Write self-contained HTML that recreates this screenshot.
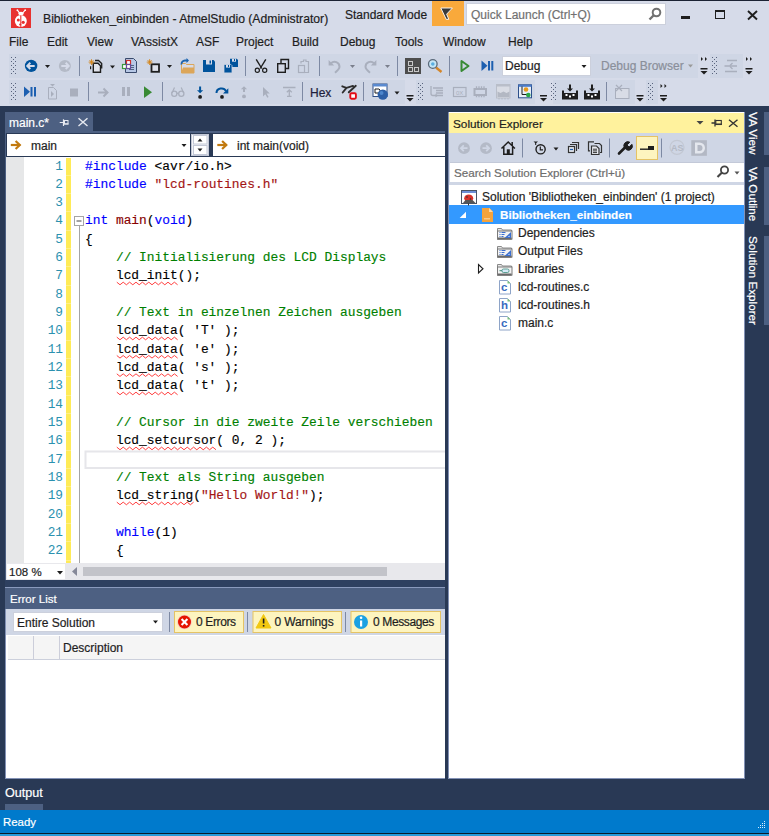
<!DOCTYPE html>
<html><head><meta charset="utf-8">
<style>
*{margin:0;padding:0;box-sizing:border-box}
html,body{width:769px;height:836px;overflow:hidden;background:#293955;font-family:"Liberation Sans",sans-serif;font-size:12px;color:#1e1e1e}
.a{position:absolute}
.t{position:absolute;white-space:pre;line-height:14px;font-size:12px;-webkit-text-stroke:0.2px}
svg{position:absolute;overflow:visible}
.code{position:absolute;left:85px;top:157.5px;font-family:"Liberation Mono",monospace;font-size:12.88px;line-height:18.33px;white-space:pre;color:#000;-webkit-text-stroke:0.15px}
.ln{position:absolute;left:24px;width:39px;top:157.5px;font-family:"Liberation Mono",monospace;font-size:12.8px;line-height:18.33px;white-space:pre;color:#2b91af;text-align:right}
.kw{color:#0000ff}.st{color:#a31515}.cm{color:#008000}.fn{color:#880000}
.sq{}
.grip{position:absolute;width:5px;background-image:radial-gradient(circle,#4d5a75 0.7px,transparent 0.8px);background-size:4px 4px}
.sep{position:absolute;width:1px;background:#8e9bbc}
</style></head><body>
<!-- top border -->
<div class="a" style="left:0;top:0;width:769px;height:1px;background:#1b2233"></div>
<!-- title + menu + toolbar area -->
<div class="a" style="left:0;top:1px;width:769px;height:105px;background:#d6dbe9"></div>

<!-- app icon -->
<div class="a" style="left:11px;top:8px;width:20px;height:20px;background:#e8312f"></div>
<svg style="left:0;top:0" width="40" height="40" viewBox="0 0 40 40">
 <circle cx="20.8" cy="21" r="6" fill="#fff"/>
 <ellipse cx="21" cy="13.6" rx="2.8" ry="1.8" fill="#fff"/>
 <path d="M17.5 10.3L19.5 12.8M25 10.3L22.8 12.8" stroke="#fff" stroke-width="1.1"/>
 <circle cx="17.4" cy="10.2" r="0.9" fill="#fff"/><circle cx="25.2" cy="10.2" r="0.9" fill="#fff"/>
 <path d="M20.8 15.3V27" stroke="#e8312f" stroke-width="1.1"/>
 <circle cx="18.3" cy="20" r="1.5" fill="#e8312f"/><circle cx="23.2" cy="22.3" r="1.6" fill="#e8312f"/><circle cx="20.2" cy="24.5" r="1.1" fill="#e8312f"/>
</svg>
<div class="t" style="left:43px;top:12px;font-size:12.2px">Bibliotheken_einbinden - AtmelStudio (Administrator)</div>
<div class="t" style="left:345px;top:7.5px">Standard Mode</div>
<div class="a" style="left:432px;top:1px;width:32px;height:25px;background:#f9a93b"></div>
<svg style="left:0;top:0" width="769" height="30" viewBox="0 0 769 30"><path d="M440.8 8H452.4L446.6 14.2L448.8 19.3H446.2Z" fill="#3a3a3a" stroke="#fff" stroke-width="0.9" stroke-linejoin="round"/></svg>
<div class="a" style="left:466px;top:3px;width:200px;height:22px;background:#fff;border:1px solid #ccd0dc"></div>
<div class="t" style="left:471px;top:8px;color:#717171">Quick Launch (Ctrl+Q)</div>
<svg style="left:648px;top:7px" width="14" height="14" viewBox="0 0 14 14"><circle cx="8.5" cy="5.5" r="3.8" fill="none" stroke="#717171" stroke-width="2"/><path d="M6 8 L1.5 12.5" stroke="#717171" stroke-width="2.4"/></svg>
<div class="a" style="left:681px;top:16px;width:9px;height:3px;background:#1e1e1e"></div>
<div class="a" style="left:715px;top:10px;width:10px;height:9px;border:1.5px solid #1e1e1e;border-top-width:2.5px"></div>
<svg style="left:747px;top:10px" width="11" height="10" viewBox="0 0 11 10"><path d="M1 1 L10 9.5 M10 1 L1 9.5" stroke="#1e1e1e" stroke-width="1.9"/></svg>

<!-- menu -->
<div class="t" style="left:9px;top:35px">File</div>
<div class="t" style="left:47px;top:35px">Edit</div>
<div class="t" style="left:87px;top:35px">View</div>
<div class="t" style="left:131px;top:35px">VAssistX</div>
<div class="t" style="left:196px;top:35px">ASF</div>
<div class="t" style="left:236px;top:35px">Project</div>
<div class="t" style="left:292px;top:35px">Build</div>
<div class="t" style="left:340px;top:35px">Debug</div>
<div class="t" style="left:395px;top:35px">Tools</div>
<div class="t" style="left:443px;top:35px">Window</div>
<div class="t" style="left:508px;top:35px">Help</div>

<!-- toolbars -->
<div id="tb1" class="a" style="left:9px;top:54px;width:689px;height:24px;background:#cfd6e5"></div>
<div class="a" style="left:710px;top:54px;width:33px;height:24px;background:#cfd6e5"></div>
<div id="tb2" class="a" style="left:9px;top:80px;width:396px;height:24px;background:#cfd6e5"></div>
<div class="a" style="left:416px;top:80px;width:119px;height:24px;background:#cfd6e5"></div>
<div class="a" style="left:553px;top:80px;width:82px;height:24px;background:#cfd6e5"></div>
<div class="a" style="left:646px;top:80px;width:12px;height:24px;background:#cfd6e5"></div>

<!--TB--><svg style="left:0;top:0" width="769" height="110" viewBox="0 0 769 110" shape-rendering="geometricPrecision"><rect x="11" y="57" width="1" height="1" fill="#58637d"/><rect x="15" y="57" width="1" height="1" fill="#58637d"/><rect x="13" y="59" width="1" height="1" fill="#58637d"/><rect x="11" y="61" width="1" height="1" fill="#58637d"/><rect x="15" y="61" width="1" height="1" fill="#58637d"/><rect x="13" y="63" width="1" height="1" fill="#58637d"/><rect x="11" y="65" width="1" height="1" fill="#58637d"/><rect x="15" y="65" width="1" height="1" fill="#58637d"/><rect x="13" y="67" width="1" height="1" fill="#58637d"/><rect x="11" y="69" width="1" height="1" fill="#58637d"/><rect x="15" y="69" width="1" height="1" fill="#58637d"/><rect x="13" y="71" width="1" height="1" fill="#58637d"/><rect x="11" y="73" width="1" height="1" fill="#58637d"/><rect x="15" y="73" width="1" height="1" fill="#58637d"/><circle cx="31.1" cy="65.9" r="6.2" fill="#00539c"/><path d="M27.3 65.9h7.4M30.3 62.8l-3 3.1 3 3.1" stroke="#d6dbe9" stroke-width="2" fill="none"/><path d="M45 65h5l-2.5 3z" fill="#1e1e1e"/><circle cx="64.9" cy="65.9" r="6" fill="#b4bac7"/><path d="M68.7 65.9h-7.4M65.7 62.8l3 3.1-3 3.1" stroke="#d6dbe9" stroke-width="2" fill="none"/><rect x="79" y="56" width="1" height="20" fill="#7d89a3"/><path d="M95 60.5h3.5l3.2 3v5" stroke="#1e1e1e" stroke-width="1.3" fill="none"/><path d="M93.3 63.3h4.7l2.5 2.5v6.5h-7.2z" fill="#e2e4ec" stroke="#1e1e1e" stroke-width="1.4"/><path d="M90.6 66.3v3" stroke="#1e1e1e" stroke-width="1.2"/><path d="M91.5 59.2v5.8M88.6 62.1h5.8M89.5 60.1l4 4M93.5 60.1l-4 4" stroke="#d4861c" stroke-width="0.9"/><circle cx="91.5" cy="62.1" r="1" fill="#d4861c"/><path d="M110 65.5h5l-2.5 3z" fill="#1e1e1e"/><path d="M125.5 58.5h8l3 3v11h-11z" fill="#b7c8e6" stroke="#394a6c"/><path d="M129 65.5h5M129 67.5h5M129 69.5h5" stroke="#394a6c" stroke-width="0.8"/><rect x="126.5" y="60.5" width="4" height="4" fill="#fff" stroke="#d0302a" stroke-width="1.2"/><rect x="122.5" y="64.5" width="4" height="4" fill="#fff" stroke="#3c9a3c" stroke-width="1.2"/><rect x="126.5" y="64.5" width="4" height="4" fill="#fff" stroke="#6a4a9a" stroke-width="1.2"/><rect x="151.5" y="64.3" width="7.5" height="7.5" fill="#dfe2ea" stroke="#1e1e1e" stroke-width="1.8"/><path d="M149.6 59.2v5.8M146.7 62.1h5.8M147.6 60.1l4 4M151.6 60.1l-4 4" stroke="#d4861c" stroke-width="0.9"/><circle cx="149.6" cy="62.1" r="1" fill="#d4861c"/><path d="M167 65h5l-2.5 3z" fill="#1e1e1e"/><path d="M181.5 63.5h4l1 1h7.5v8.5h-12.5z" fill="#d6dbe9" stroke="#dca65a"/><path d="M181 73h13l0-5.5h-11z" fill="#dca65a"/><path d="M181.5 64.5a3.5 3.5 0 0 1 3.5-4h2.5" stroke="#1c64b0" stroke-width="1.8" fill="none"/><path d="M186.5 58l2.5 2.5-2.5 2.5z" fill="#1c64b0"/><path d="M203 60h10.5l1.5 1.5v10.5h-12z" fill="#00539c"/><rect x="206" y="60" width="6" height="4.5" fill="#d6dbe9"/><rect x="209.5" y="60.5" width="1.5" height="3" fill="#00539c"/><path d="M230 58.7h6.8l1.2 1.2v7.1h-8z" fill="#00539c"/><rect x="232" y="58.7" width="4" height="3" fill="#d6dbe9"/><rect x="234" y="59" width="1" height="2" fill="#00539c"/><path d="M224 64.4h6.8l1.2 1.2v7.3h-8z" fill="#00539c" stroke="#cfd6e5" stroke-width="0.8"/><rect x="226" y="64.6" width="4" height="3" fill="#d6dbe9"/><rect x="228" y="65" width="1" height="2" fill="#00539c"/><rect x="245" y="56" width="1" height="20" fill="#7d89a3"/><circle cx="257.3" cy="70.3" r="2.1" fill="none" stroke="#1e1e1e" stroke-width="1.2"/><circle cx="264.7" cy="70.3" r="2.1" fill="none" stroke="#1e1e1e" stroke-width="1.2"/><path d="M256.2 59.3l5.6 9.2M265.8 59.3l-5.6 9.2" stroke="#1e1e1e" stroke-width="1.4"/><path d="M281 63v-3.5h7.5v9h-3" fill="none" stroke="#1e1e1e" stroke-width="1.4"/><rect x="277.7" y="63.7" width="7.6" height="8.6" fill="#d2d7e4" stroke="#1e1e1e" stroke-width="1.4"/><path d="M301 63.5v-2h2.5v-1.5h2.5v1.5h2.5v11h-4" fill="none" stroke="#a9afbd" stroke-width="1.2"/><rect x="298.5" y="65.5" width="6" height="7" fill="none" stroke="#a9afbd" stroke-width="1.2"/><rect x="319" y="56" width="1" height="20" fill="#7d89a3"/><path d="M331 63.2a5 5 0 0 1 8.5 3.5c0 2-1.5 3.5-4.5 6" stroke="#a9afbd" stroke-width="2" fill="none"/><path d="M328.6 60v5.6h5.6z" fill="#a9afbd"/><path d="M350 65h5l-2.5 3z" fill="#7a7f8c"/><path d="M374 63.2a5 5 0 0 0 -8.5 3.5c0 2 1.5 3.5 4.5 6" stroke="#a9afbd" stroke-width="2" fill="none"/><path d="M376.4 60v5.6h-5.6z" fill="#a9afbd"/><path d="M385 65h5l-2.5 3z" fill="#7a7f8c"/><rect x="397" y="56" width="1" height="20" fill="#7d89a3"/><rect x="405" y="58" width="16" height="16" fill="#4d4d4d"/><rect x="408.5" y="61.5" width="4" height="4" fill="none" stroke="#c8c8c8"/><rect x="408.5" y="67.5" width="4" height="4" fill="none" stroke="#c8c8c8"/><rect x="414.5" y="67.5" width="4" height="4" fill="none" stroke="#c8c8c8"/><path d="M436 67.5l5.5 4.5" stroke="#d4862a" stroke-width="2.4"/><circle cx="432.8" cy="64" r="4.3" fill="#c6e6f6" stroke="#5b6a7a" stroke-width="1.3"/><circle cx="432.8" cy="64" r="1.8" fill="#5aaee0"/><rect x="449" y="56" width="1" height="20" fill="#7d89a3"/><path d="M461.5 61v10l7-5z" fill="none" stroke="#388a34" stroke-width="2" stroke-linejoin="round"/><path d="M481.5 60.5v10.5l6-5.25z" fill="#1c5fb0"/><rect x="488" y="61" width="2" height="9.5" fill="#1c5fb0"/><rect x="491.3" y="61" width="2" height="9.5" fill="#1c5fb0"/><path d="M688 64.5h5l-2.5 3z" fill="#9a9a9a"/><rect x="700.5" y="68" width="7" height="1.5" fill="#1e1e1e"/><path d="M700.5 71h7l-3.5 3.5z" fill="#1e1e1e"/><path d="M701.0 57v4l2-2z M705.0 57v4l2-2z" fill="#1e1e1e"/><rect x="712" y="57" width="1" height="1" fill="#58637d"/><rect x="716" y="57" width="1" height="1" fill="#58637d"/><rect x="714" y="59" width="1" height="1" fill="#58637d"/><rect x="712" y="61" width="1" height="1" fill="#58637d"/><rect x="716" y="61" width="1" height="1" fill="#58637d"/><rect x="714" y="63" width="1" height="1" fill="#58637d"/><rect x="712" y="65" width="1" height="1" fill="#58637d"/><rect x="716" y="65" width="1" height="1" fill="#58637d"/><rect x="714" y="67" width="1" height="1" fill="#58637d"/><rect x="712" y="69" width="1" height="1" fill="#58637d"/><rect x="716" y="69" width="1" height="1" fill="#58637d"/><rect x="714" y="71" width="1" height="1" fill="#58637d"/><rect x="712" y="73" width="1" height="1" fill="#58637d"/><rect x="716" y="73" width="1" height="1" fill="#58637d"/><path d="M727 60.5h10M730 66h7M725 71.5h12M724.5 66h5" stroke="#a9afbd" stroke-width="1.3"/><path d="M729.5 66l3-3M729.5 66l3 3" stroke="#a9afbd" stroke-width="1.3" fill="none"/><rect x="745.5" y="68" width="7" height="1.5" fill="#1e1e1e"/><path d="M745.5 71h7l-3.5 3.5z" fill="#1e1e1e"/><path d="M746.0 57v4l2-2z M750.0 57v4l2-2z" fill="#1e1e1e"/><rect x="11" y="83" width="1" height="1" fill="#58637d"/><rect x="15" y="83" width="1" height="1" fill="#58637d"/><rect x="13" y="85" width="1" height="1" fill="#58637d"/><rect x="11" y="87" width="1" height="1" fill="#58637d"/><rect x="15" y="87" width="1" height="1" fill="#58637d"/><rect x="13" y="89" width="1" height="1" fill="#58637d"/><rect x="11" y="91" width="1" height="1" fill="#58637d"/><rect x="15" y="91" width="1" height="1" fill="#58637d"/><rect x="13" y="93" width="1" height="1" fill="#58637d"/><rect x="11" y="95" width="1" height="1" fill="#58637d"/><rect x="15" y="95" width="1" height="1" fill="#58637d"/><rect x="13" y="97" width="1" height="1" fill="#58637d"/><rect x="11" y="99" width="1" height="1" fill="#58637d"/><rect x="15" y="99" width="1" height="1" fill="#58637d"/><path d="M24 86.5v10.5l6-5.25z" fill="#1c5fb0"/><rect x="30.5" y="87" width="2" height="9.5" fill="#1c5fb0"/><rect x="34" y="87" width="2" height="9.5" fill="#1c5fb0"/><path d="M48.5 87.5h5l3 3v8.5h-8z" fill="none" stroke="#a9afbd"/><path d="M51 91v6l3-3z" fill="#a9afbd"/><path d="M50 84h5l-2.5 2.5z" fill="#a9afbd"/><rect x="70" y="88.5" width="8" height="8" fill="#a9afbd"/><rect x="88" y="82" width="1" height="19" fill="#7d89a3"/><path d="M98 92.5h9M103.5 88.5l4 4-4 4" stroke="#a9afbd" stroke-width="2" fill="none"/><rect x="122" y="87" width="3" height="9" fill="#a9afbd"/><rect x="127" y="87" width="3" height="9" fill="#a9afbd"/><path d="M144 86.3v11.7l8-5.85z" fill="#388a34"/><rect x="162" y="82" width="1" height="19" fill="#7d89a3"/><circle cx="174.3" cy="93.8" r="2.6" fill="none" stroke="#a9afbd" stroke-width="1.3"/><circle cx="181.3" cy="93.8" r="2.6" fill="none" stroke="#a9afbd" stroke-width="1.3"/><path d="M176.8 93.3h2M172 93l2.5-5.5M183.7 93l-2.5-5.5" stroke="#a9afbd" stroke-width="1.2" fill="none"/><path d="M200.1 86.5v5" stroke="#00539c" stroke-width="2"/><path d="M197 90.3h6.2l-3.1 3z" fill="#00539c"/><circle cx="200.1" cy="96.9" r="1.9" fill="#1e1e1e"/><path d="M216.5 93a5 4.5 0 0 1 9.5-2" stroke="#00539c" stroke-width="2" fill="none"/><path d="M228.3 88.2v5.3h-5.3z" fill="#00539c"/><circle cx="222" cy="96.9" r="1.9" fill="#1e1e1e"/><path d="M244 92v-5" stroke="#a9afbd" stroke-width="2"/><path d="M240.9 89.2h6.2l-3.1-3z" fill="#a9afbd"/><circle cx="244" cy="96.4" r="1.9" fill="#a9afbd"/><path d="M263 87v9.5l2.3-2.3 2 3.5 1.3-.8-2-3.4h3.2z" fill="#a9afbd"/><path d="M283 87.5h12.5M289.3 90v6M286.8 92.3l2.5-2.5 2.5 2.5M287 96.3h4.6" stroke="#a9afbd" stroke-width="1.3" fill="none"/><rect x="302" y="82" width="1" height="19" fill="#7d89a3"/><path d="M342.3 86.3l4.2 1.6-3.8 4.6M346.5 87.9l6.5-2M355.8 85.8l-7 6.5" stroke="#2e2e2e" stroke-width="1.9" fill="none" stroke-linecap="round"/><rect x="350.3" y="93.2" width="5.6" height="5.6" rx="1.2" fill="#fff" stroke="#e30c16" stroke-width="1.9"/><rect x="363" y="82" width="1" height="19" fill="#7d89a3"/><rect x="373" y="84" width="14" height="12.5" fill="#fff" stroke="#2e4e86"/><rect x="373" y="84" width="14" height="2.5" fill="#5a8ad0"/><path d="M375 89h4l1 1v3h-5z" fill="none" stroke="#1e1e1e"/><circle cx="382.8" cy="94.6" r="5.2" fill="#2d5fa6"/><circle cx="381.5" cy="93" r="2" fill="#4d86cc"/><path d="M394.5 91.5h5l-2.5 3z" fill="#1e1e1e"/><rect x="406.5" y="95" width="7" height="1.5" fill="#1e1e1e"/><path d="M406.5 98h7l-3.5 3.5z" fill="#1e1e1e"/><rect x="418" y="83" width="1" height="1" fill="#58637d"/><rect x="422" y="83" width="1" height="1" fill="#58637d"/><rect x="420" y="85" width="1" height="1" fill="#58637d"/><rect x="418" y="87" width="1" height="1" fill="#58637d"/><rect x="422" y="87" width="1" height="1" fill="#58637d"/><rect x="420" y="89" width="1" height="1" fill="#58637d"/><rect x="418" y="91" width="1" height="1" fill="#58637d"/><rect x="422" y="91" width="1" height="1" fill="#58637d"/><rect x="420" y="93" width="1" height="1" fill="#58637d"/><rect x="418" y="95" width="1" height="1" fill="#58637d"/><rect x="422" y="95" width="1" height="1" fill="#58637d"/><rect x="420" y="97" width="1" height="1" fill="#58637d"/><rect x="418" y="99" width="1" height="1" fill="#58637d"/><rect x="422" y="99" width="1" height="1" fill="#58637d"/><path d="M433 88h10M436 90.5h7M436 93h7M436 95.5h7M431 86v7.5a2 2 0 0 0 2 2h3" stroke="#a9afbd" stroke-width="1.3" fill="none"/><path d="M435.5 93.5l2.5 2-2.5 2z" fill="#a9afbd"/><rect x="453.5" y="87.5" width="12.5" height="9" fill="none" stroke="#a9afbd" stroke-width="1.2"/><text x="456" y="94.5" font-size="6" fill="#a9afbd" font-family="Liberation Sans">0X</text><rect x="474.5" y="89" width="11.5" height="6" fill="none" stroke="#a9afbd" stroke-width="2"/><path d="M476.5 86.3v2M479 86.3v2M481.5 86.3v2M484 86.3v2M476.5 95.2v2M479 95.2v2M481.5 95.2v2M484 95.2v2" stroke="#a9afbd" stroke-width="1.3"/><rect x="496.5" y="84.5" width="13.5" height="13.5" fill="#d9dce4" stroke="#b9bec9"/><rect x="496.5" y="84.5" width="13.5" height="2" fill="#b9bec9"/><path d="M497.5 91.5l3 1.5 3-1.5 3 1.5 3-1.5v5.5h-12z" fill="#b3b8c3"/><path d="M499 98v1.5M502 98v1.5M505 98v1.5M508 98v1.5" stroke="#b3b8c3"/><rect x="518.5" y="84.8" width="13" height="13" fill="#e6eef8" stroke="#2b4f8a"/><rect x="518.5" y="84.8" width="13" height="2" fill="#4b7bc8"/><path d="M522 86.5v8h5" stroke="#1e1e1e" fill="none"/><circle cx="526" cy="89.5" r="2.3" fill="#e79a1c"/><circle cx="528.3" cy="95" r="2.3" fill="#2aa84a"/><rect x="540" y="95" width="7" height="1.5" fill="#1e1e1e"/><path d="M540 98h7l-3.5 3.5z" fill="#1e1e1e"/><rect x="551" y="83" width="1" height="1" fill="#58637d"/><rect x="555" y="83" width="1" height="1" fill="#58637d"/><rect x="553" y="85" width="1" height="1" fill="#58637d"/><rect x="551" y="87" width="1" height="1" fill="#58637d"/><rect x="555" y="87" width="1" height="1" fill="#58637d"/><rect x="553" y="89" width="1" height="1" fill="#58637d"/><rect x="551" y="91" width="1" height="1" fill="#58637d"/><rect x="555" y="91" width="1" height="1" fill="#58637d"/><rect x="553" y="93" width="1" height="1" fill="#58637d"/><rect x="551" y="95" width="1" height="1" fill="#58637d"/><rect x="555" y="95" width="1" height="1" fill="#58637d"/><rect x="553" y="97" width="1" height="1" fill="#58637d"/><rect x="551" y="99" width="1" height="1" fill="#58637d"/><rect x="555" y="99" width="1" height="1" fill="#58637d"/><path d="M563 90.5v8h14v-8" fill="none" stroke="#1e1e1e" stroke-width="2"/><rect x="563" y="93" width="14" height="5.5" fill="#1e1e1e"/><path d="M570 84.5v5" stroke="#1e1e1e" stroke-width="2"/><path d="M567 88.5h6l-3 3z" fill="#1e1e1e"/><rect x="565.5" y="94" width="2" height="2" fill="#fff"/><rect x="569" y="95.5" width="2" height="2" fill="#fff"/><rect x="572.5" y="94" width="2" height="2" fill="#fff"/><path d="M585 90.5v8h14v-8" fill="none" stroke="#1e1e1e" stroke-width="2"/><rect x="585" y="93" width="14" height="5.5" fill="#1e1e1e"/><path d="M592 84.5v5" stroke="#1e1e1e" stroke-width="2"/><path d="M589 88.5h6l-3 3z" fill="#1e1e1e"/><rect x="587.5" y="94" width="2" height="2" fill="#fff"/><rect x="591" y="95.5" width="2" height="2" fill="#fff"/><rect x="594.5" y="94" width="2" height="2" fill="#fff"/><rect x="606" y="82" width="1" height="19" fill="#7d89a3"/><rect x="615.5" y="88.5" width="13.5" height="10" fill="#d8dce6" stroke="#a9afbd"/><path d="M616 85l6 6M622 85l-6 6" stroke="#a9afbd" stroke-width="1.2"/><rect x="636.5" y="95" width="7" height="1.5" fill="#1e1e1e"/><path d="M636.5 98h7l-3.5 3.5z" fill="#1e1e1e"/><rect x="648" y="83" width="1" height="1" fill="#58637d"/><rect x="652" y="83" width="1" height="1" fill="#58637d"/><rect x="650" y="85" width="1" height="1" fill="#58637d"/><rect x="648" y="87" width="1" height="1" fill="#58637d"/><rect x="652" y="87" width="1" height="1" fill="#58637d"/><rect x="650" y="89" width="1" height="1" fill="#58637d"/><rect x="648" y="91" width="1" height="1" fill="#58637d"/><rect x="652" y="91" width="1" height="1" fill="#58637d"/><rect x="650" y="93" width="1" height="1" fill="#58637d"/><rect x="648" y="95" width="1" height="1" fill="#58637d"/><rect x="652" y="95" width="1" height="1" fill="#58637d"/><rect x="650" y="97" width="1" height="1" fill="#58637d"/><rect x="648" y="99" width="1" height="1" fill="#58637d"/><rect x="652" y="99" width="1" height="1" fill="#58637d"/><rect x="660" y="95" width="7" height="1.5" fill="#1e1e1e"/><path d="M660 98h7l-3.5 3.5z" fill="#1e1e1e"/><path d="M660.5 84v4l2-2z M664.5 84v4l2-2z" fill="#1e1e1e"/></svg><!--/TB-->
<div class="a" style="left:502px;top:56px;width:89px;height:20px;background:#fff;border:1px solid #ccd0dc"></div>
<div class="t" style="left:505px;top:59px">Debug</div>
<svg style="left:581px;top:65px" width="6" height="4" viewBox="0 0 6 4"><path d="M0.5 0h5l-2.5 3z" fill="#1e1e1e"/></svg>
<div class="t" style="left:601px;top:59px;color:#8a8f9a">Debug Browser</div>
<div class="t" style="left:310px;top:86px;color:#1e1e3c">Hex</div>

<!-- ===== editor ===== -->
<div class="a" style="left:5px;top:112px;width:88px;height:19px;background:#4d6082"></div>
<div class="t" style="left:9px;top:116px;color:#fff">main.c*</div>
<div class="a" style="left:5px;top:131px;width:440px;height:2px;background:#4d6082"></div>
<div class="a" style="left:5px;top:133px;width:1px;height:447px;background:#4d6082"></div>
<!-- nav bar -->
<div class="a" style="left:7px;top:134px;width:183px;height:22px;background:#fff"></div>
<div class="a" style="left:213px;top:134px;width:232px;height:22px;background:#fff"></div>
<div class="t" style="left:31px;top:139px">main</div>
<div class="t" style="left:237px;top:139px">int main(void)</div>
<!-- code area -->
<div class="a" style="left:6px;top:157px;width:439px;height:406px;background:#fff"></div>
<div class="a" style="left:6px;top:157px;width:18px;height:406px;background:#e6e7e8"></div>
<div class="a" style="left:66px;top:157.5px;width:5px;height:405.5px;background:repeating-linear-gradient(to bottom,#ffeb57 0,#ffeb57 16.8px,#fff08a 16.8px,#fff08a 17.8px,#ffeb57 17.8px,#ffeb57 18.33px)"></div>
<div class="ln">1
2
3
4
5
6
7
8
9
10
11
12
13
14
15
16
17
18
19
20
21
22</div>
<div class="code"><span class="kw">#include</span> &lt;avr/io.h&gt;
<span class="kw">#include</span> <span class="st">"lcd-routines.h"</span>

<span class="kw">int</span> <span class="fn">main</span>(<span class="kw">void</span>)
{
    <span class="cm">// Initialisierung des LCD Displays</span>
    <span class="sq">lcd_init</span>();

    <span class="cm">// Text in einzelnen Zeichen ausgeben</span>
    <span class="sq">lcd_data</span>( 'T' );
    <span class="sq">lcd_data</span>( 'e' );
    <span class="sq">lcd_data</span>( 's' );
    <span class="sq">lcd_data</span>( 't' );

    <span class="cm">// Cursor in die zweite Zeile verschieben</span>
    <span class="sq">lcd_setcursor</span>( 0, 2 );

    <span class="cm">// Text als String ausgeben</span>
    <span class="sq">lcd_string</span>(<span class="st">"Hello World!"</span>);

    <span class="kw">while</span>(1)
    {</div>
<!-- hscroll row -->
<div class="a" style="left:6px;top:563px;width:439px;height:17px;background:#e8e8ec"></div>
<div class="a" style="left:7px;top:564px;width:58px;height:15px;background:#fff"></div>
<div class="t" style="left:9px;top:565px;font-size:11.5px">108 %</div>

<!-- ===== error list ===== -->
<div class="a" style="left:5px;top:580px;width:440px;height:7px;background:#2e4060"></div>
<div class="a" style="left:5px;top:587px;width:440px;height:191.5px;background:#fff;border-left:1px solid #8291b5;border-bottom:1px solid #8291b5"></div>
<div class="a" style="left:5px;top:587px;width:440px;height:1px;background:#8a9abd"></div>
<div class="a" style="left:5px;top:588px;width:440px;height:21px;background:#4d6082"></div>
<div class="t" style="left:10px;top:592px;color:#fff;font-size:11.5px">Error List</div>
<div class="a" style="left:6px;top:609px;width:439px;height:26px;background:#cfd6e5"></div>
<div class="a" style="left:8px;top:636px;width:437px;height:23px;background:#f5f5f5"></div>
<div class="a" style="left:8px;top:659px;width:437px;height:1px;background:#ccd0dc"></div>
<div class="a" style="left:13px;top:612px;width:150px;height:20px;background:#fff;border:1px solid #ccd0dc"></div>
<div class="t" style="left:17px;top:616px">Entire Solution</div>
<div class="t" style="left:63px;top:641px">Description</div>

<!-- ===== solution explorer ===== -->
<div class="a" style="left:448px;top:112px;width:297px;height:666.5px;background:#fff;border-left:1px solid #8291b5;border-right:1px solid #8291b5;border-bottom:1px solid #8291b5"></div>
<div class="a" style="left:449px;top:113px;width:295px;height:20px;background:#fff29d"></div>
<div class="t" style="left:453px;top:117px;font-size:11.8px">Solution Explorer</div>
<div class="a" style="left:449px;top:133px;width:295px;height:52px;background:#cfd6e5"></div>
<div class="a" style="left:450px;top:162px;width:294px;height:1px;background:#c3c9d8"></div><div class="a" style="left:450px;top:163px;width:294px;height:19px;background:#fff"></div>
<div class="t" style="left:454px;top:166px;color:#6d6d6d;font-size:11.65px">Search Solution Explorer (Ctrl+ü)</div>
<div class="a" style="left:449px;top:205px;width:295px;height:19px;background:#3399ff"></div>
<div class="t" style="left:482px;top:190px">Solution 'Bibliotheken_einbinden' (1 project)</div>
<div class="t" style="left:500px;top:208px;color:#fff;font-weight:bold;font-size:11.7px">Bibliotheken_einbinden</div>
<div class="t" style="left:518px;top:226px">Dependencies</div>
<div class="t" style="left:518px;top:244px">Output Files</div>
<div class="t" style="left:518px;top:262px">Libraries</div>
<div class="t" style="left:518px;top:280px">lcd-routines.c</div>
<div class="t" style="left:518px;top:298px">lcd-routines.h</div>
<div class="t" style="left:518px;top:316px">main.c</div>

<!-- right vertical tabs -->
<div class="a" style="left:764px;top:112px;width:5px;height:43px;background:#4d6082"></div>
<div class="a" style="left:764px;top:167px;width:5px;height:58px;background:#4d6082"></div>
<div class="a" style="left:764px;top:236px;width:5px;height:89px;background:#4d6082"></div>

<!-- output tab + status -->
<div class="t" style="left:5px;top:785.5px;color:#fff;font-size:12.6px">Output</div>
<div class="a" style="left:5px;top:804px;width:38px;height:6px;background:#4d6082"></div>
<div class="a" style="left:0;top:810px;width:769px;height:23px;background:#007acc"></div>
<div class="t" style="left:3px;top:814.8px;color:#fff;font-size:11.4px">Ready</div>
<div class="a" style="left:0;top:833px;width:769px;height:1px;background:#0a1a2a"></div>
<div class="a" style="left:0;top:834px;width:769px;height:2px;background:#2a9ad8"></div>
<!--IC--><svg style="left:0;top:0" width="769" height="836" viewBox="0 0 769 836"><path d="M59.7 122.5h4M63.5 119.2v6.8" stroke="#e6e9f0" stroke-width="1.2"/><rect x="64.5" y="120.5" width="3.5" height="3.5" fill="none" stroke="#e6e9f0"/><rect x="64" y="123.3" width="4.5" height="1.2" fill="#e6e9f0"/><path d="M78.5 118.3l9 7.7M87.5 118.3l-9 7.7" stroke="#e6e9f0" stroke-width="1.4"/><path d="M10.8 145h9.5" stroke="#c27a10" stroke-width="2.2"/><path d="M15.600000000000001 141l4.2 4-4.2 4" stroke="#c27a10" stroke-width="2.2" fill="none"/><path d="M217.3 145h9.5" stroke="#c27a10" stroke-width="2.2"/><path d="M222.10000000000002 141l4.2 4-4.2 4" stroke="#c27a10" stroke-width="2.2" fill="none"/><path d="M181.5 144h5l-2.5 3.0z" fill="#1e1e1e"/><rect x="191.5" y="134.5" width="17" height="21" fill="#f3f4f7" stroke="#c3c8d6"/><rect x="193.5" y="135.5" width="13.5" height="8.5" fill="#fff" stroke="#c3c8d6"/><rect x="193.5" y="145.5" width="13.5" height="9" fill="#fff" stroke="#c3c8d6"/><path d="M197.5 141.5h5l-2.5-3z" fill="#1e1e1e"/><path d="M197.5 148.5h5l-2.5 3z" fill="#1e1e1e"/><rect x="79" y="226" width="1" height="337" fill="#a5a5a5"/><rect x="74.5" y="216.5" width="9" height="9" fill="#fff" stroke="#a5a5a5"/><path d="M76.5 221h5" stroke="#444" stroke-width="1"/><path d="M445 451.5H85.5V468H445" fill="none" stroke="#e6e6ea" stroke-width="2"/><path d="M57 571h6l-3.0 3.5999999999999996z" fill="#1e1e1e"/><path d="M77 567v9l-5-4.5z" fill="#868999"/><rect x="83" y="567" width="304" height="9" fill="#c2c3c9"/><path d="M153 620.5h5l-2.5 3z" fill="#1e1e1e"/><rect x="169" y="612" width="1" height="20" fill="#7d89a3"/><rect x="247" y="612" width="1" height="20" fill="#7d89a3"/><rect x="345" y="612" width="1" height="20" fill="#7d89a3"/><rect x="174.5" y="611.5" width="69" height="21" fill="#fdf4bf" stroke="#e5c365"/><rect x="253.0" y="611.5" width="88.5" height="21" fill="#fdf4bf" stroke="#e5c365"/><rect x="351.0" y="611.5" width="89.5" height="21" fill="#fdf4bf" stroke="#e5c365"/><circle cx="184.5" cy="622" r="7.3" fill="#f6c9c0"/><circle cx="184.5" cy="622" r="6.5" fill="#e51400"/><path d="M181.6 619.1l5.8 5.8M187.4 619.1l-5.8 5.8" stroke="#fff" stroke-width="2.1"/><path d="M263.5 614.5l7.5 13.5h-15z" fill="#f2c811" stroke="#f2c811" stroke-width="1" stroke-linejoin="round"/><rect x="262.8" y="618.5" width="1.6" height="5" fill="#1e1e1e"/><rect x="262.8" y="625" width="1.6" height="1.6" fill="#1e1e1e"/><circle cx="361" cy="622" r="7" fill="#1ba1e2"/><rect x="360" y="620.5" width="2.2" height="6" fill="#fff"/><circle cx="361.1" cy="617.8" r="1.3" fill="#fff"/><rect x="33" y="636" width="1" height="23" fill="#ccceda"/><rect x="59" y="636" width="1" height="23" fill="#ccceda"/><path d="M696.5 121h7l-3.5 3.5z" fill="#444"/><path d="M711.5 123h3.5M715 119.5v7" stroke="#333" stroke-width="1.3"/><rect x="715.8" y="120.5" width="5.5" height="4" fill="none" stroke="#333" stroke-width="1.1"/><rect x="715.5" y="123.5" width="6.3" height="1.5" fill="#333"/><path d="M729 119.8l8.5 7M737.5 119.8l-8.5 7" stroke="#333" stroke-width="1.4"/><circle cx="464" cy="148.2" r="5.9" fill="#b4bac7"/><path d="M467.5 148.2h-6.5M463.8 145.3l-2.9 2.9 2.9 2.9" stroke="#cfd6e5" stroke-width="1.8" fill="none"/><circle cx="486" cy="148.2" r="5.9" fill="#b4bac7"/><path d="M482.5 148.2h6.5M486.2 145.3l2.9 2.9-2.9 2.9" stroke="#cfd6e5" stroke-width="1.8" fill="none"/><path d="M501.5 148.5l6.7-6.5 6.7 6.5M503.8 147v7.2h8.8V147M512.2 142v4" stroke="#1e1e1e" stroke-width="1.5" fill="none"/><rect x="506.8" y="149.3" width="3" height="5" fill="#1e1e1e"/><rect x="522" y="138.5" width="1" height="19" fill="#7d89a3"/><path d="M533.5 141.5h4.5l-2.25 2z" fill="#1e1e1e"/><path d="M535.7 143v2" stroke="#1e1e1e"/><circle cx="540.6" cy="149.3" r="4.6" fill="none" stroke="#1e1e1e" stroke-width="1.4"/><path d="M540.3 146.5v3.3h2.7" stroke="#1e1e1e" stroke-width="1.2" fill="none"/><path d="M553.5 147.5h5l-2.5 3.0z" fill="#1e1e1e"/><path d="M572 142.5h6.5v6.5M570 144.5h6.5v6.5" stroke="#333" stroke-width="1.2" fill="none"/><rect x="568.5" y="146.5" width="6" height="6" fill="#e8eaf0" stroke="#333" stroke-width="1.2"/><path d="M570 149.5h3" stroke="#1c5fb0" stroke-width="1.3"/><path d="M590 150.8h-1.5v-9h5.5" stroke="#333" stroke-width="1.2" fill="none"/><path d="M594.5 143.5h5l2 2v7h-1.5" stroke="#333" stroke-width="1.2" fill="none"/><path d="M591.5 146h5l2.5 2.5v6h-7.5z" fill="#e8eaf0" stroke="#333" stroke-width="1.2"/><path d="M593 149.2h4M593 150.9h4M593 152.6h4" stroke="#333" stroke-width="1"/><rect x="609" y="138.5" width="1" height="19" fill="#7d89a3"/><path d="M619 153.5l6.5-6.5" stroke="#1e1e1e" stroke-width="2.6" stroke-linecap="round"/><path d="M624.3 147.5a4 4 0 0 1 5.5-5.3l-2.5 2.5 0.5 1.6 1.6 0.5 2.5-2.5a4 4 0 0 1-5.3 5.5z" fill="#1e1e1e" stroke="#1e1e1e" stroke-width="1"/><rect x="636.5" y="136.5" width="21" height="23" fill="#fdf4bf" stroke="#e5c365"/><path d="M640 149.2h8.5" stroke="#1e1e1e" stroke-width="1.4"/><rect x="648" y="146" width="6" height="4" fill="#1e1e1e"/><rect x="661" y="138.5" width="1" height="19" fill="#7d89a3"/><circle cx="677" cy="147.3" r="7" fill="none" stroke="#c3c8d3" stroke-width="1.2"/><text x="671" y="151" font-size="9" fill="#b5bac6" font-family="Liberation Sans" font-weight="bold">AS</text><rect x="691.3" y="140.2" width="15.6" height="15.6" fill="#b3b8c4"/><path d="M695 142.5h4.5a5.5 5.5 0 0 1 0 11h-4.5z" fill="#e4e7ee"/><path d="M697.5 145h2a3 3 0 0 1 0 6h-2z" fill="#b3b8c4"/><circle cx="724.5" cy="170" r="3.6" fill="none" stroke="#444" stroke-width="1.8"/><path d="M722 172.5l-4.5 4.5" stroke="#444" stroke-width="2.2"/><path d="M734.5 171.5h5l-2.5 3.0z" fill="#555"/><rect x="461.5" y="190.5" width="15" height="13" fill="#fff" stroke="#4a5565"/><rect x="462" y="191" width="14" height="2" fill="#6d8fd6"/><ellipse cx="468.7" cy="198.3" rx="4.5" ry="3.8" fill="#d8332a"/><path d="M463 203l2.5-3h7l3 3z" fill="#555"/><circle cx="467" cy="197" r="0.8" fill="#333"/><circle cx="470.5" cy="199" r="0.8" fill="#333"/><path d="M468.5 203.5v2" stroke="#333"/><path d="M466 211.7v6.3h-6.3z" fill="#fff"/><path d="M482 208h7.5l3.5 3.5v10.5h-11z" fill="#f5a33c"/><path d="M489 208v4h4z" fill="#fcd9a8"/><rect x="484" y="218" width="6" height="1.5" fill="#fcd9a8" opacity="0.7"/><path d="M497.5 228.5h4l1 1.5h9v9.5h-14z" fill="#e8e8e8" stroke="#8a8a8a"/><rect x="497.5" y="231" width="14.5" height="8" fill="#f3f3f3" stroke="#7a7a7a"/><rect x="498" y="237.5" width="13.5" height="1.5" fill="#6a6a6a"/><path d="M499.5 232.5h1M501.5 232.5h4M499.5 234.5h1M501.5 234.5h3M499.5 236.5h1M501.5 236.5h2" stroke="#3b6fd0" stroke-width="1"/><path d="M511 232v6h-6.5z" fill="#3b6fd0"/><path d="M509.5 235.5v1.5h-1.5z" fill="#fff"/><path d="M497.5 246.5h4l1 1.5h9v9.5h-14z" fill="#e8e8e8" stroke="#8a8a8a"/><rect x="497.5" y="249" width="14.5" height="8" fill="#f3f3f3" stroke="#7a7a7a"/><rect x="498" y="255.5" width="13.5" height="1.5" fill="#6a6a6a"/><path d="M499.5 250.5h1M501.5 250.5h4M499.5 252.5h1M501.5 252.5h3M499.5 254.5h1M501.5 254.5h2" stroke="#3b6fd0" stroke-width="1"/><path d="M511 250v6h-6.5z" fill="#3b6fd0"/><path d="M509.5 253.5v1.5h-1.5z" fill="#fff"/><path d="M497.5 264.5h4l1 1.5h9v9.5h-14z" fill="#e8e8e8" stroke="#8a8a8a"/><rect x="497.5" y="267" width="14.5" height="8" fill="#f3f3f3" stroke="#7a7a7a"/><rect x="498" y="273.5" width="13.5" height="1.5" fill="#6a6a6a"/><rect x="502" y="269" width="7" height="3.5" rx="1.5" fill="#d6eaf8" stroke="#3a8a7a" stroke-width="0.8"/><path d="M499.5 270.7h2.5" stroke="#3a8a7a"/><path d="M478.5 264.5v8.5l4.5-4.25z" fill="none" stroke="#1e1e1e" stroke-width="1.1"/><path d="M499.5 280.5h8l3 3v10.5h-11z" fill="#fff" stroke="#8ea4c8"/><path d="M507.5 280.5l3 3h-3z" fill="#7cc47a"/><text x="501" y="290.6" font-size="11.5" font-weight="bold" fill="#3a6cc0" font-family="Liberation Sans">c</text><path d="M499.5 298.5h8l3 3v10.5h-11z" fill="#fff" stroke="#8ea4c8"/><path d="M507.5 298.5l3 3h-3z" fill="#7cc47a"/><text x="501" y="308.6" font-size="11.5" font-weight="bold" fill="#3a6cc0" font-family="Liberation Sans">h</text><path d="M499.5 316.5h8l3 3v10.5h-11z" fill="#fff" stroke="#8ea4c8"/><path d="M507.5 316.5l3 3h-3z" fill="#7cc47a"/><text x="501" y="326.6" font-size="11.5" font-weight="bold" fill="#3a6cc0" font-family="Liberation Sans">c</text><rect x="764" y="821" width="1" height="1" fill="#dcefff"/><rect x="764" y="823" width="1" height="1" fill="#dcefff"/><rect x="762" y="823" width="1" height="1" fill="#dcefff"/><rect x="764" y="825" width="1" height="1" fill="#dcefff"/><rect x="762" y="825" width="1" height="1" fill="#dcefff"/><rect x="760" y="825" width="1" height="1" fill="#dcefff"/><rect x="764" y="827" width="1" height="1" fill="#dcefff"/><rect x="762" y="827" width="1" height="1" fill="#dcefff"/><rect x="760" y="827" width="1" height="1" fill="#dcefff"/><rect x="758" y="827" width="1" height="1" fill="#dcefff"/><polyline points="116.80,282.18 120.00,284.78 123.20,282.18 126.40,284.78 129.60,282.18 132.80,284.78 136.00,282.18 139.20,284.78 142.40,282.18 145.60,284.78 148.80,282.18 152.00,284.78 155.20,282.18 158.40,284.78 161.60,282.18 164.80,284.78 168.00,282.18 171.20,284.78 174.40,282.18 177.60,284.78" fill="none" stroke="#ff2020" stroke-width="1" stroke-opacity="0.85"/><polyline points="116.80,337.17 120.00,339.77 123.20,337.17 126.40,339.77 129.60,337.17 132.80,339.77 136.00,337.17 139.20,339.77 142.40,337.17 145.60,339.77 148.80,337.17 152.00,339.77 155.20,337.17 158.40,339.77 161.60,337.17 164.80,339.77 168.00,337.17 171.20,339.77 174.40,337.17 177.60,339.77" fill="none" stroke="#ff2020" stroke-width="1" stroke-opacity="0.85"/><polyline points="116.80,355.50 120.00,358.10 123.20,355.50 126.40,358.10 129.60,355.50 132.80,358.10 136.00,355.50 139.20,358.10 142.40,355.50 145.60,358.10 148.80,355.50 152.00,358.10 155.20,355.50 158.40,358.10 161.60,355.50 164.80,358.10 168.00,355.50 171.20,358.10 174.40,355.50 177.60,358.10" fill="none" stroke="#ff2020" stroke-width="1" stroke-opacity="0.85"/><polyline points="116.80,373.83 120.00,376.43 123.20,373.83 126.40,376.43 129.60,373.83 132.80,376.43 136.00,373.83 139.20,376.43 142.40,373.83 145.60,376.43 148.80,373.83 152.00,376.43 155.20,373.83 158.40,376.43 161.60,373.83 164.80,376.43 168.00,373.83 171.20,376.43 174.40,373.83 177.60,376.43" fill="none" stroke="#ff2020" stroke-width="1" stroke-opacity="0.85"/><polyline points="116.80,392.16 120.00,394.76 123.20,392.16 126.40,394.76 129.60,392.16 132.80,394.76 136.00,392.16 139.20,394.76 142.40,392.16 145.60,394.76 148.80,392.16 152.00,394.76 155.20,392.16 158.40,394.76 161.60,392.16 164.80,394.76 168.00,392.16 171.20,394.76 174.40,392.16 177.60,394.76" fill="none" stroke="#ff2020" stroke-width="1" stroke-opacity="0.85"/><polyline points="116.80,447.15 120.00,449.75 123.20,447.15 126.40,449.75 129.60,447.15 132.80,449.75 136.00,447.15 139.20,449.75 142.40,447.15 145.60,449.75 148.80,447.15 152.00,449.75 155.20,447.15 158.40,449.75 161.60,447.15 164.80,449.75 168.00,447.15 171.20,449.75 174.40,447.15 177.60,449.75 180.80,447.15 184.00,449.75 187.20,447.15 190.40,449.75 193.60,447.15 196.80,449.75 200.00,447.15 203.20,449.75 206.40,447.15 209.60,449.75 212.80,447.15 216.00,449.75" fill="none" stroke="#ff2020" stroke-width="1" stroke-opacity="0.85"/><polyline points="116.80,502.14 120.00,504.74 123.20,502.14 126.40,504.74 129.60,502.14 132.80,504.74 136.00,502.14 139.20,504.74 142.40,502.14 145.60,504.74 148.80,502.14 152.00,504.74 155.20,502.14 158.40,504.74 161.60,502.14 164.80,504.74 168.00,502.14 171.20,504.74 174.40,502.14 177.60,504.74 180.80,502.14 184.00,504.74 187.20,502.14 190.40,504.74 193.60,502.14" fill="none" stroke="#ff2020" stroke-width="1" stroke-opacity="0.85"/></svg><!--/IC-->
<div class="t" style="left:196px;top:615px;letter-spacing:-0.37px">0 Errors</div>
<div class="t" style="left:274.5px;top:615px;letter-spacing:-0.12px">0 Warnings</div>
<div class="t" style="left:373px;top:615px;letter-spacing:-0.37px">0 Messages</div>
<div class="a" style="left:745px;top:112px;width:19px;height:220px"><div class="t" style="left:15px;top:0px;color:#fff;font-size:11.7px;transform-origin:0 0;transform:rotate(90deg)">VA View</div><div class="t" style="left:15px;top:55px;color:#fff;font-size:11.7px;transform-origin:0 0;transform:rotate(90deg)">VA Outline</div><div class="t" style="left:15px;top:124px;color:#fff;font-size:11.7px;transform-origin:0 0;transform:rotate(90deg)">Solution Explorer</div></div>
</body></html>
